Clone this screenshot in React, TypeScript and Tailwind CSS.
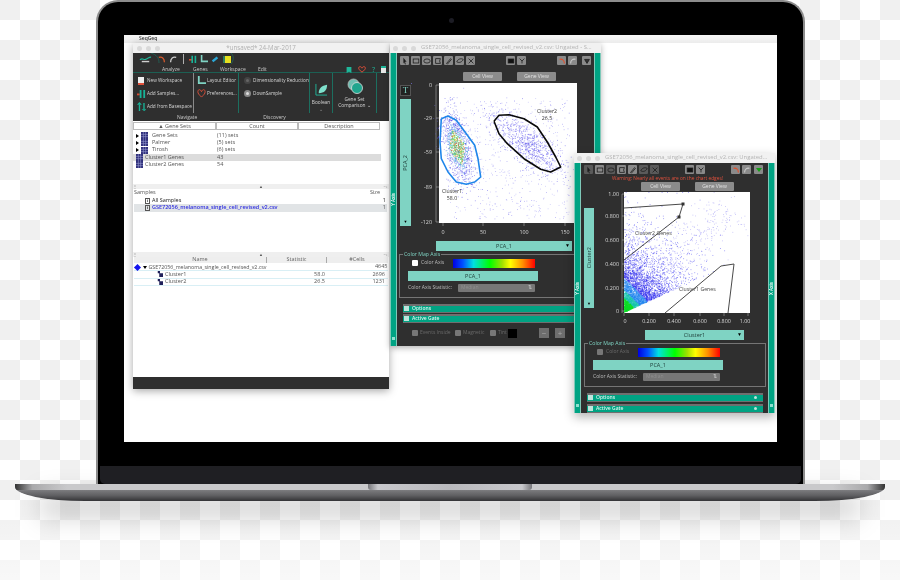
import React from 'react';

const font = "font-['Open_Sans',sans-serif]";

// small seeded generator so the scatter stays the same on every render
const makeRandom = (seed: number) => {
  let s = seed;
  return () => {
    s = (s * 1664525 + 1013904223) % 4294967296;
    return s / 4294967296;
  };
};

const gauss = (r: () => number) => Math.sqrt(-2 * Math.log(r() + 0.0001)) * Math.cos(6.283 * r());

type Dot = { x: number; y: number; c: string };

const pcaDots = (): Dot[] => {
  const r = makeRandom(11);
  const dots: Dot[] = [];
  for (let i = 0; i < 560; i++) {
    dots.push({ x: r() * 124 + 6, y: 14 + r() * 122, c: i % 2 ? '#a5a2f5' : '#7a72ee' });
  }
  for (let i = 0; i < 800; i++) {
    const a = gauss(r);
    const b = gauss(r);
    dots.push({ x: 88 + a * 17 + b * 6, y: 60 + a * 14 - b * 6, c: i % 3 ? '#4a40ea' : '#8a84f2' });
  }
  for (let i = 0; i < 1300; i++) {
    const a = gauss(r);
    const b = gauss(r);
    const x = 18 + a * 4.5 + b * 6;
    const y = 64 + a * 17 - b * 2;
    const d = Math.abs(a) + Math.abs(b) * 0.8;
    let c = i % 4 ? '#4a42ea' : '#7a72ee';
    if (d < 1.1) c = ['#e8352a', '#2fbf3a', '#e8d92a', '#27b8d8', '#2fbf3a'][i % 5];
    else if (d < 1.6 && i % 2) c = '#2a9fe0';
    dots.push({ x, y, c });
  }
  return dots;
};

const clusterDots = (): Dot[] => {
  const r = makeRandom(29);
  const list: { x: number; y: number; d: number }[] = [];
  for (let i = 0; i < 4600; i++) {
    const x = -Math.log(r() + 0.001) * 15;
    const y = -Math.log(r() + 0.001) * 18 + x * 0.45;
    list.push({ x, y, d: x + y });
  }
  const dots: Dot[] = [];
  for (let i = 0; i < 260; i++) {
    const t = r();
    dots.push({ x: 40 + t * 65 + gauss(r) * 11, y: 75 - t * 58 + gauss(r) * 11, c: '#8a84f2' });
  }
  list.sort((a, b) => b.d - a.d);
  list.forEach((p) => {
    let c = '#2a26ee';
    if (p.d < 14) c = '#12e02c';
    else if (p.d < 22) c = '#1cc8b0';
    else if (p.d < 34) c = '#1f86f0';
    dots.push({ x: p.x, y: 120 - p.y, c });
  });
  return dots;
};

const pca = pcaDots();
const cluster = clusterDots();

const Teal = ({ className = '', children }: { className?: string; children?: React.ReactNode }) => (
  <div className={`bg-[#7fd3c3] text-[#1d3b36] flex items-center justify-center ${className}`}>{children}</div>
);

const TrafficLights = () => (
  <div className="flex gap-[4px] shrink-0">
    <span className="w-[5px] h-[5px] rounded-full bg-[#d9d9d9]" />
    <span className="w-[5px] h-[5px] rounded-full bg-[#d9d9d9]" />
    <span className="w-[5px] h-[5px] rounded-full bg-[#d9d9d9]" />
  </div>
);

const TitleBar = ({ title }: { title: string }) => (
  <div className="h-[10px] shrink-0 bg-[#f1f1f1] flex items-center pl-[3px] gap-[5px]">
    <TrafficLights />
    <span className="text-[5.900px] leading-none text-[#b4b4b4] whitespace-nowrap">{title}</span>
  </div>
);

const ToolBtn = ({ children, off }: { children?: React.ReactNode; off?: boolean }) => (
  <div className={`w-[9px] h-[9px] rounded-[1px] flex items-center justify-center ${off ? 'bg-[#5a5a5a]' : 'bg-[#8a8a8a]'}`}>
    <svg viewBox="0 0 10 10" className="w-[8px] h-[8px]" fill="none" stroke="#1c1c1c" strokeWidth="1">
      {children}
    </svg>
  </div>
);

const GateTools = ({ dim }: { dim?: boolean }) => (
  <div className="flex gap-[2px]">
    <ToolBtn off={dim}><path d="M3 1l4 5H5l1 3-1 .4L4 6.500 3 8z" fill="#1c1c1c" stroke="none" /></ToolBtn>
    <ToolBtn><rect x="1.500" y="2.500" width="7" height="5" /></ToolBtn>
    <ToolBtn off={dim}><ellipse cx="5" cy="5" rx="4" ry="2.600" /></ToolBtn>
    <ToolBtn><path d="M2 2h6l-1 3 1 3H2z" /></ToolBtn>
    <ToolBtn><path d="M2 8l5-6 1 1-5 6z" /></ToolBtn>
    <ToolBtn off={dim}><path d="M1 6c1-3 5-5 8-3-1 3-5 5-8 3z" /></ToolBtn>
    <ToolBtn off={dim}><path d="M2 2l6 6M8 2L2 8" /></ToolBtn>
  </div>
);

const Pair = () => (
  <div className="flex gap-[2px]">
    <ToolBtn><rect x="1.500" y="2.500" width="7" height="5" fill="#111" /></ToolBtn>
    <ToolBtn><path d="M2 2l3 3 3-3M5 5v3" /></ToolBtn>
  </div>
);

const Undo = () => (
  <div className="flex gap-[2px]">
    <div className="w-[9px] h-[9px] rounded-[1px] bg-[#8a8a8a] flex items-center justify-center">
      <svg viewBox="0 0 10 10" className="w-[8px] h-[8px]" fill="none" stroke="#e2502c" strokeWidth="1.400"><path d="M2 3c3-1 6 1 6 5" /></svg>
    </div>
    <div className="w-[9px] h-[9px] rounded-[1px] bg-[#8a8a8a] flex items-center justify-center">
      <svg viewBox="0 0 10 10" className="w-[8px] h-[8px]" fill="none" stroke="#c9c9c9" strokeWidth="1.400"><path d="M8 3C5 2 2 4 2 8" /></svg>
    </div>
  </div>
);

const GreyBtn = ({ label, className = '' }: { label: string; className?: string }) => (
  <div className={`w-[39px] h-[9px] bg-[#8c8c8c] rounded-[1px] flex items-center justify-center text-[5px] text-[#e2e2e2] ${className}`}>{label}</div>
);

const Gradient = () => (
  <div className="w-[82px] h-[9px] bg-[linear-gradient(to_right,#0000e0,#0050ff_12%,#00e0e0_25%,#00ff00_45%,#a0e000_60%,#ffff00_70%,#ff9000_85%,#ff0000)]" />
);

const Accordion = ({ label, withKnob }: { label: string; withKnob?: boolean }) => (
  <div className="h-[9px] bg-[#6f6f6f] flex items-center py-[1.500px]">
    <div className="w-full h-full bg-[#00a383] flex items-center pl-[1px]">
      <span className="w-[5px] h-[5px] bg-[#bfe4dc] mr-[3px] shrink-0" />
      <span className="text-[5px] font-semibold text-[#d8f5ee] leading-none">{label}</span>
      {withKnob && <span className="ml-auto mr-[6px] w-[3px] h-[3px] rounded-full bg-[#bfe4dc]" />}
    </div>
  </div>
);

const ColorBox = ({ checked }: { checked: boolean }) => (
  <div className="relative border border-[#757575] h-[44px] flex flex-col pl-[8px]">
    <span className="absolute -top-[3px] left-[3px] bg-[#2f2f2f] px-[1px] text-[5.200px] leading-none text-[#7fd3c3]">Color Map Axis</span>
    <div className="flex items-center h-[16px]">
      <span className={`w-[6px] h-[6px] rounded-[1px] ml-[4px] ${checked ? 'bg-white' : 'bg-[#777777]'}`} />
      <span className={`text-[5px] ml-[3px] w-[32px] ${checked ? 'text-[#bdbdbd]' : 'text-[#6c6c6c]'}`}>Color Axis</span>
      <Gradient />
    </div>
    <Teal className="w-[130px] h-[10px] text-[5.500px]">PCA_1</Teal>
    <div className="flex items-center h-[14px] text-[5px] text-[#bdbdbd]">
      <span className="w-[50px]">Color Axis Statistic:</span>
      <div className="w-[77px] h-[8px] bg-[#777777] rounded-[1px] flex items-center justify-between px-[3px] text-[#8f8f8f]">
        <span>Median</span>
        <span className="text-[#c8c8c8]">⇅</span>
      </div>
    </div>
  </div>
);

const Strip = ({ label, className = '' }: { label: string; className?: string }) => (
  <div className={`w-[7px] shrink-0 bg-[#00a383] border-x border-[#7fc9b9] flex items-center justify-center relative ${className}`}>
    <span className="text-[4.500px] font-semibold text-white [writing-mode:vertical-rl] rotate-180 whitespace-nowrap">{label}</span>
    <span className="absolute bottom-[6px] w-[3px] h-[3px] bg-[#8fe0d0]" />
  </div>
);

const Tick = ({ x, y, children, anchor = 'end' }: { x: number; y: number; children: React.ReactNode; anchor?: 'end' | 'middle' }) => (
  <text x={x} y={y} fontSize="5.400" fill="#d5d5d5" textAnchor={anchor} fontFamily="Open Sans, sans-serif">{children}</text>
);

const PcaPlot = () => (
  <svg viewBox="0 0 166 156" className="w-[166px] h-[156px] block shrink-0 overflow-visible">
    <rect x="28" y="0" width="138" height="140" fill="#fff" />
    {pca.map((d, i) => (
      <rect key={i} x={28 + d.x} y={d.y} width="0.800" height="0.800" fill={d.c} opacity="0.65" />
    ))}
    <polyline fill="none" stroke="#1f86ea" strokeWidth="1.600" strokeLinejoin="round" points="30.300,35.700 37,33 45.300,37.300 55.300,50.700 63.700,62.300 67,75.700 69.700,94 63.700,99 55.300,101.300 45.300,99 37,89 30.300,75.700 29,59 30.300,35.700" />
    <polyline fill="none" stroke="#0a0a0a" strokeWidth="1.600" strokeLinejoin="round" points="83,38.300 88,32.300 98,31.700 113,35.700 126.300,44 136.300,59 144.700,74 149.700,84 139.700,89 129.700,86.300 113,75.700 96.300,60.700 88,50.700 83,38.300" />
    <text x="136" y="30" fontSize="5.200" fill="#333" textAnchor="middle" fontFamily="Open Sans, sans-serif">Cluster2</text>
    <text x="136" y="37" fontSize="5.200" fill="#333" textAnchor="middle" fontFamily="Open Sans, sans-serif">26.5</text>
    <text x="41" y="110" fontSize="5.200" fill="#333" textAnchor="middle" fontFamily="Open Sans, sans-serif">Cluster1</text>
    <text x="41" y="117" fontSize="5.200" fill="#333" textAnchor="middle" fontFamily="Open Sans, sans-serif">58.0</text>
    <Tick x={21} y={4}>0</Tick>
    <Tick x={21} y={37}>-29</Tick>
    <Tick x={21} y={71}>-59</Tick>
    <Tick x={21} y={106}>-89</Tick>
    <Tick x={21} y={141}>-120</Tick>
    <path d="M25 2v137M25 2h3M25 35h3M25 69h3M25 104h3M25 139h3M32 140v3M72 140v3M113 140v3M154 140v3" stroke="#aaa" strokeWidth="0.600" fill="none" />
    <Tick x={32} y={151} anchor="middle">0</Tick>
    <Tick x={72} y={151} anchor="middle">50</Tick>
    <Tick x={113} y={151} anchor="middle">100</Tick>
    <Tick x={154} y={151} anchor="middle">150</Tick>
  </svg>
);

const ClusterPlot = () => (
  <svg viewBox="0 0 156 134" className="w-[156px] h-[134px] block shrink-0 overflow-visible">
    <rect x="30" y="0" width="126" height="121" fill="#fff" />
    {cluster.map((d, i) => (
      <rect key={i} x={30 + Math.min(d.x, 125)} y={Math.max(d.y, 0)} width="0.800" height="0.800" fill={d.c} opacity="0.6" />
    ))}
    <g fill="none" stroke="#4a4a4a" strokeWidth="1">
      <polyline points="30,16 89,12 85,25 30,68" />
      <polyline points="71,121 127,74 140,72 134,121" />
    </g>
    <rect x="87.500" y="10.500" width="3" height="3" fill="#333" />
    <rect x="83.500" y="23.500" width="3" height="3" fill="#333" />
    <text x="41" y="43" fontSize="5.200" fill="#444" fontFamily="Open Sans, sans-serif">Cluster2 Genes</text>
    <text x="85" y="99" fontSize="5.200" fill="#444" fontFamily="Open Sans, sans-serif">Cluster1 Genes</text>
    <Tick x={25} y={4}>1.00</Tick>
    <Tick x={25} y={26}>0.800</Tick>
    <Tick x={25} y={50}>0.600</Tick>
    <Tick x={25} y={74}>0.400</Tick>
    <Tick x={25} y={98}>0.200</Tick>
    <Tick x={25} y={121}>0</Tick>
    <path d="M28 2v119M28 2h2M28 24h2M28 48h2M28 72h2M28 96h2M28 119h2M30 121v3M55 121v3M80 121v3M106 121v3M130 121v3M154 121v3" stroke="#aaa" strokeWidth="0.600" fill="none" />
    <Tick x={31} y={131} anchor="middle">0</Tick>
    <Tick x={55} y={131} anchor="middle">0.200</Tick>
    <Tick x={80} y={131} anchor="middle">0.400</Tick>
    <Tick x={106} y={131} anchor="middle">0.600</Tick>
    <Tick x={130} y={131} anchor="middle">0.800</Tick>
    <Tick x={151} y={131} anchor="middle">1.00</Tick>
  </svg>
);

const Grid = () => (
  <svg viewBox="0 0 8 8" className="w-[7px] h-[7px] shrink-0">
    <rect width="8" height="8" fill="#2f2f7a" />
    <path d="M0 2.700h8M0 5.300h8M2.700 0v8M5.300 0v8" stroke="#9fa3d8" strokeWidth="0.600" />
  </svg>
);

const Arrow = () => <span className="w-0 h-0 border-y-[2.500px] border-y-transparent border-l-[3.500px] border-l-black mr-[2px] shrink-0" />;

const GeneRow = ({ name, count, tree, active }: { name: string; count: string; tree?: boolean; active?: boolean }) => (
  <div className={`h-[7.300px] flex items-center text-[5.500px] leading-none text-[#555] ${active ? 'bg-[#dcdcdc]' : ''}`}>
    <div className="w-[84px] flex items-center pl-[3px]">
      {tree && <Arrow />}
      <Grid />
      <span className={tree ? 'ml-[4px]' : 'ml-[2px]'}>{name}</span>
    </div>
    <span>{count}</span>
  </div>
);

const Info = () => (
  <span className="w-[5px] h-[6px] border border-[#555] text-[4px] leading-[4px] text-center font-bold text-[#222] mr-[2px] shrink-0">i</span>
);

const Splitter = () => (
  <div className="h-[5px] shrink-0 bg-[#efefef] flex items-center justify-center relative text-[4px] leading-none text-[#555]">
    <span className="absolute left-0 text-[#777]">⋮</span>
    <span>▲</span>
    <span className="absolute right-[1px] text-[#777]">−+</span>
  </div>
);

const Gate = () => (
  <svg viewBox="0 0 8 8" className="w-[6px] h-[6px] shrink-0 mr-[2px]">
    <rect width="8" height="8" fill="#fff" />
    <path d="M1 0h3v3H1zM3 3h5v5H3z" fill="#20205a" />
  </svg>
);

const RibbonItem = ({ icon, label }: { icon: React.ReactNode; label: string }) => (
  <div className="flex items-center h-[13px] text-[4.700px] text-[#d5d5d5] whitespace-nowrap">
    <span className="w-[10px] h-[10px] flex items-center justify-center shrink-0 mr-[1px]">{icon}</span>
    {label}
  </div>
);

const Svg10 = ({ children }: { children: React.ReactNode }) => (
  <svg viewBox="0 0 10 10" className="w-[9px] h-[9px]">{children}</svg>
);

const MainWindow = () => (
  <div className="absolute left-[9px] top-[8px] w-[256px] h-[346px] bg-white flex flex-col shadow-[0_2px_8px_rgba(0,0,0,0.35)]">
    <div className="h-[10px] shrink-0 bg-[#f1f1f1] flex items-center pl-[4px] relative">
      <TrafficLights />
      <span className="absolute inset-x-0 text-center text-[6.200px] leading-none text-[#b0b0b0]">*unsaved* 24-Mar-2017</span>
    </div>
    {/* ribbon */}
    <div className="h-[68px] shrink-0 bg-[#2f2f2f] flex flex-col relative">
      <svg viewBox="0 0 110 14" className="absolute left-[6px] top-0 w-[110px] h-[14px]" fill="none" stroke="#1c6f60" strokeWidth="0.700">
        <path d="M12 0c6 2 8 5 8 10" />
        <path d="M92 0c3 3 3 7 0 11" />
      </svg>
      <div className="h-[14px] flex items-center pl-[6px] relative">
        <svg viewBox="0 0 14 8" className="w-[13px] h-[8px]">
          <path d="M1 5c3-3 4 1 7-1 2-1 3-2 5-2" stroke="#1fb79a" strokeWidth="1.200" fill="none" />
          <rect x="3" y="6" width="8" height="1.500" fill="#cfcfcf" />
        </svg>
        <svg viewBox="0 0 10 10" className="w-[8px] h-[8px] ml-[6px]" fill="none" stroke="#d95a2c" strokeWidth="1.600"><path d="M1 3c4-1 7 1 7 6" /></svg>
        <svg viewBox="0 0 10 10" className="w-[8px] h-[8px] ml-[3px]" fill="none" stroke="#d0d0d0" strokeWidth="1.600"><path d="M9 3C5 2 2 4 2 9" /></svg>
        <span className="w-px h-[10px] bg-[#b0b0b0] ml-[6px]" />
        <svg viewBox="0 0 10 10" className="w-[8px] h-[8px] ml-[5px]">
          <path d="M0 5h4v2H0z" fill="#d94a30" /><path d="M3 1h2v9H3zM7 1h2v9H7z" fill="#18b398" />
        </svg>
        <svg viewBox="0 0 10 10" className="w-[8px] h-[8px] ml-[3px]" fill="#7fd3c3"><path d="M1 0h2v7h7v2H1z" /></svg>
        <svg viewBox="0 0 10 10" className="w-[8px] h-[8px] ml-[3px]"><path d="M1 7L7 2l2 2-6 5z" fill="#2ba7d6" /></svg>
        <span className="w-[8px] h-[7px] ml-[4px] bg-[#e6e020] border-l-2 border-[#2f7f5f]" />
      </div>
      <div className="h-[8px] flex items-center text-[5px] text-[#c9c9c9] border-b border-[#1c5f53] pl-[29px] pr-[3px] pt-[2px]">
        <span className="w-[17px] text-center">Analyze</span>
        <span className="w-[14px] text-center ml-[14px]">Genes</span>
        <span className="w-[24px] text-center ml-[13px]">Workspace</span>
        <span className="w-[8px] text-center ml-[14px]">Edit</span>
        <div className="ml-auto flex items-center gap-[6px]">
          <svg viewBox="0 0 10 10" className="w-[6px] h-[8px]"><path d="M1 0h8v10L5 8 1 10z" fill="#1fb79a" /></svg>
          <svg viewBox="0 0 12 10" className="w-[8px] h-[7px]" fill="none" stroke="#e0503a" strokeWidth="1.500"><path d="M6 9C2 6 1 4 1 3c0-3 4-3 5 0 1-3 5-3 5 0 0 1-1 3-5 6z" /></svg>
          <span className="text-[7px] leading-none text-[#1fb79a]">?</span>
          <span className="w-[5px] h-[7px] bg-[#e8e8e8] border-t-2 border-[#1fb79a]" />
        </div>
      </div>
      <div className="flex-1 flex">
        <div className="w-[61px] border-r border-[#8a8a8a] flex flex-col pl-[3px] pt-[1px] relative">
          <RibbonItem label="New Workspace" icon={<span className="w-[6px] h-[8px] bg-[#eee] border-b-2 border-[#e0503a]" />} />
          <RibbonItem label="Add Samples..." icon={<Svg10><path d="M0 5h3v2H0z" fill="#d94a30" /><path d="M3 1h2v9H3zM7 1h2v9H7z" fill="#18b398" /></Svg10>} />
          <RibbonItem label="Add from Basespace" icon={<Svg10><path d="M2 3h1.500v7H2zM7 1h1.500v7H7z" fill="#18b398" /><path d="M0 3l2.700-3 2.700 3zM5 8h6l-3 2z" fill="#18b398" /></Svg10>} />
        </div>
        <div className="w-[45px] border-r border-[#1c6f60] flex flex-col pl-[2px] pt-[1px]">
          <RibbonItem label="Layout Editor" icon={<Svg10><path d="M1 0h2v7h7v2H1z" fill="#7fd3c3" /></Svg10>} />
          <RibbonItem label="Preferences..." icon={<Svg10><path d="M5 9C2 6 1 5 1 3c0-3 3-3 4 0 1-3 4-3 4 0 0 2-1 3-4 6z" fill="none" stroke="#e0503a" strokeWidth="1" /></Svg10>} />
        </div>
        <div className="w-[71px] border-r border-[#1c6f60] flex flex-col pl-[3px] pt-[1px]">
          <RibbonItem label="Dimensionality Reduction" icon={<span className="w-[7px] h-[7px] rounded-full bg-[#666] border-[2px] border-[#444]" />} />
          <RibbonItem label="DownSample" icon={<span className="w-[7px] h-[7px] rounded-full bg-[#ddd] border-[2px] border-[#888]" />} />
        </div>
        <div className="w-[23px] border-r border-[#1c6f60] flex flex-col items-center pt-[10px] text-[4.800px] text-[#d5d5d5] leading-[7px]">
          <svg viewBox="0 0 14 14" className="w-[13px] h-[13px]">
            <path d="M1 1v12h12" stroke="#1fb79a" strokeWidth="1" fill="none" />
            <path d="M4 11c0-5 3-8 9-9 0 6-3 9-9 9z" fill="#7fe0cc" />
          </svg>
          <span className="mt-[3px]">Boolean</span>
          <span className="text-[#999]">⌄</span>
        </div>
        <div className="w-[44px] border-r border-[#1c6f60] flex flex-col items-center pt-[5px] text-[4.800px] text-[#d5d5d5] leading-[6px]">
          <svg viewBox="0 0 16 16" className="w-[16px] h-[16px]">
            <circle cx="6.500" cy="6.500" r="5.500" fill="#6fbfb2" stroke="#bbb" strokeWidth="0.800" />
            <circle cx="10" cy="10" r="5.500" fill="#1fa58e" stroke="#ddd" strokeWidth="0.800" />
          </svg>
          <span className="mt-[2px]">Gene Set</span>
          <span>Comparison ⌄</span>
        </div>
      </div>
      <div className="h-[8px] flex text-[5px] leading-[8px] text-[#c9c9c9] text-center">
        <span className="w-[61px] pl-[44px] text-left whitespace-nowrap">Navigate</span>
        <span className="w-[45px]" />
        <span className="w-[71px]">Discovery</span>
      </div>
    </div>
    {/* gene sets */}
    <div className="pr-[8px] h-[63px] shrink-0 pt-px">
      <div className="h-[8px] flex text-[5.500px] text-[#555] text-center leading-[7px]">
        <span className="w-[83px] border border-[#bbb]">▲ Gene Sets</span>
        <span className="w-[82px] border border-[#bbb]">Count</span>
        <span className="w-[82px] border border-[#bbb]">Description</span>
      </div>
      <div className="pt-[2px]">
        <GeneRow name="Gene Sets" count="(11) sets" tree />
        <GeneRow name="Palmer" count="(5) sets" tree />
        <GeneRow name="Tirosh" count="(6) sets" tree />
        <GeneRow name="Cluster1 Genes" count="43" active />
        <GeneRow name="Cluster2 Genes" count="54" />
      </div>
    </div>
    <Splitter />
    {/* samples */}
    <div className="h-[63px] shrink-0 text-[5.500px] leading-none text-[#555] pl-px pr-[2px]">
      <div className="h-[8px] flex items-center justify-between pr-[7px]">
        <span>Samples</span>
        <span>Size</span>
      </div>
      <div className="h-[7px] flex items-center justify-between pl-[11px] text-[#222] pr-[1px]">
        <span className="flex items-center"><Info />All Samples</span>
        <span>1</span>
      </div>
      <div className="h-[7.500px] flex items-center justify-between pl-[11px] bg-[#e1e4e6] pr-[1px]">
        <span className="flex items-center font-semibold text-[#2c2ce0]"><Info />GSE72056_melanoma_single_cell_revised_v2.csv</span>
        <span>1</span>
      </div>
    </div>
    <Splitter />
    {/* gates */}
    <div className="flex-1 text-[5.500px] leading-none text-[#555] px-px">
      <div className="h-[6px] flex text-center leading-[5px] bg-[#eee] text-[#666] mb-px">
        <span className="w-[133px] border-r border-[#aaa]">Name</span>
        <span className="w-[60px] border-r border-[#aaa]">Statistic</span>
        <span className="w-[60px]">#Cells</span>
      </div>
      <div className="h-[7.300px] flex items-center border-b border-[#d9eff5]">
        <span className="w-[5px] h-[5px] rotate-45 bg-[#1414ee] ml-[1px] mr-[2.500px] shrink-0" />
        <span className="w-0 h-0 border-x-[2px] border-x-transparent border-t-[3px] border-t-black mr-[2px] shrink-0" />
        <span className="w-[120px] shrink-0 whitespace-nowrap text-[5.300px]">GSE72056_melanoma_single_cell_revised_v2.csv</span>
        <span className="w-[60px] shrink-0" />
        <span className="w-[59px] text-right">4645</span>
      </div>
      {[
        ['Cluster1', '58.0', '2696'],
        ['Cluster2', '26.5', '1231'],
      ].map(([name, stat, cells]) => (
        <div key={name} className="h-[7.300px] flex items-center border-b border-[#d9eff5]">
          <span className="w-[23px] shrink-0" />
          <Gate />
          <span className="w-[101px]">{name}</span>
          <span className="w-[59px] text-right">{stat}</span>
          <span className="w-[60px] text-right">{cells}</span>
        </div>
      ))}
    </div>
    <div className="h-[12px] shrink-0 bg-[#2f2f2f]" />
  </div>
);

const PcaWindow = () => (
  <div className="absolute left-[266px] top-[8px] w-[211px] h-[303px] flex flex-col shadow-[0_2px_6px_rgba(0,0,0,0.3)]">
    <TitleBar title="GSE72056_melanoma_single_cell_revised_v2.csv: Ungated - S..." />
    <div className="flex-1 flex bg-[#2f2f2f] min-h-0">
      <Strip label="Y Axis" />
      <div className="flex-1 min-w-0 flex flex-col">
        <div className="h-[14px] shrink-0 flex items-center pl-[3px] pt-[1px]">
          <GateTools />
          <div className="ml-[31px]"><Pair /></div>
          <div className="ml-[31px]"><Undo /></div>
          <div className="ml-[5px]"><ToolBtn><path d="M2 3h6L5 8z" fill="#333" /></ToolBtn></div>
        </div>
        <div className="flex gap-[15px] pl-[66px] pt-[5px] h-[16px] shrink-0">
          <GreyBtn label="Cell View" />
          <GreyBtn label="Gene View" />
        </div>
        <div className="flex pl-[3px] shrink-0">
          <div className="w-[11px] shrink-0 flex flex-col">
            <div className="h-[11px] mt-[2px] border border-[#555] bg-[#222] text-[9px] leading-[9px] text-center text-[#7fd3c3] font-['Liberation_Serif',serif]">T</div>
            <Teal className="h-[127px] mt-[3px] relative text-[5.500px]">
              <span className="[writing-mode:vertical-rl] rotate-180">PCA_2</span>
              <span className="absolute bottom-[1px] text-[4px] text-black">▼</span>
            </Teal>
          </div>
          <PcaPlot />
        </div>
        <Teal className="w-[136px] h-[10px] shrink-0 ml-[39px] mt-[2px] relative text-[5.500px]">
          PCA_1
          <span className="absolute right-[2px] text-[5px] text-black">▼</span>
        </Teal>
        <div className="mt-[3px] ml-[2px] mr-[2px] shrink-0"><ColorBox checked /></div>
        <div className="mt-[6px] ml-[6px] shrink-0">
          <Accordion label="Options" />
          <div className="mt-px"><Accordion label="Active Gate" /></div>
        </div>
        <div className="h-[20px] shrink-0 flex items-center pl-[15px] text-[5px] text-[#6a6a6a]">
          <span className="w-[6px] h-[6px] bg-[#777] rounded-[1px] mr-[2px]" />
          <span className="w-[35px]">Events Inside</span>
          <span className="w-[6px] h-[6px] bg-[#777] rounded-[1px] mr-[2px]" />
          <span className="w-[27px]">Magnetic</span>
          <span className="w-[6px] h-[6px] bg-[#777] rounded-[1px] mr-[2px]" />
          <span className="w-[10px]">Tint</span>
          <span className="w-[9px] h-[9px] bg-black" />
          <span className="w-[10px] h-[10px] bg-[#6e6e6e] ml-[22px] text-center leading-[9px] text-[#aaa] text-[8px]">−</span>
          <span className="w-[10px] h-[10px] bg-[#6e6e6e] ml-[6px] text-center leading-[9px] text-[#aaa] text-[8px]">+</span>
        </div>
      </div>
      <Strip label="" />
    </div>
  </div>
);

const ClusterWindow = () => (
  <div className="absolute left-[450px] top-[118px] w-[201px] h-[260px] flex flex-col shadow-[0_4px_10px_rgba(0,0,0,0.3)]">
    <TitleBar title="GSE72056_melanoma_single_cell_revised_v2.csv: Ungated..." />
    <div className="flex-1 flex bg-[#2f2f2f] min-h-0">
      <Strip label="Y Axis" />
      <div className="flex-1 min-w-0 flex flex-col">
        <div className="h-[11px] shrink-0 flex items-center pl-[3px] pt-[2px]">
          <GateTools dim />
          <div className="ml-[26px]"><Pair /></div>
          <div className="ml-[26px]"><Undo /></div>
          <div className="ml-[3px]">
            <div className="w-[9px] h-[9px] rounded-[1px] bg-[#8a8a8a] flex items-center justify-center">
              <span className="w-0 h-0 border-x-[3px] border-x-transparent border-t-[4px] border-t-[#12a012]" />
            </div>
          </div>
        </div>
        <div className="h-[8px] shrink-0 text-[4.800px] leading-[8px] text-[#e2503c] text-center pr-[14px] whitespace-nowrap">Warning: Nearly all events are on the chart edges!</div>
        <div className="flex gap-[15px] pl-[60px] h-[9px] shrink-0">
          <GreyBtn label="Cell View" className="text-[#333]" />
          <GreyBtn label="Gene View" />
        </div>
        <div className="flex pl-[3px] pt-[1px] shrink-0">
          <div className="w-[10px] shrink-0 pt-[16px]">
            <Teal className="h-[100px] relative text-[5.500px]">
              <span className="[writing-mode:vertical-rl] rotate-180">Cluster2</span>
              <span className="absolute bottom-[1px] text-[4px] text-black">▼</span>
            </Teal>
          </div>
          <ClusterPlot />
        </div>
        <Teal className="w-[99px] h-[10px] shrink-0 ml-[64px] mt-[4px] relative text-[5.500px]">
          Cluster1
          <span className="absolute right-[2px] text-[5px] text-black">▼</span>
        </Teal>
        <div className="mt-[3px] ml-[3px] mr-[2px] shrink-0"><ColorBox checked={false} /></div>
        <div className="mt-[6px] ml-[6px] mr-[5px] shrink-0">
          <Accordion label="Options" withKnob />
          <div className="mt-[2px]"><Accordion label="Active Gate" withKnob /></div>
        </div>
      </div>
      <Strip label="X Axis" />
    </div>
  </div>
);

export default function App() {
  return (
    <div className={`relative w-[900px] h-[580px] overflow-hidden bg-[conic-gradient(#fff_25%,#f0f0f0_0_50%,#fff_0_75%,#f0f0f0_0)] bg-[length:40px_40px] ${font}`}>
      {/* soft fade of the pattern and cast shadow under the laptop */}
      <div className="absolute inset-x-0 top-[500px] h-[80px] bg-[linear-gradient(to_bottom,rgba(255,255,255,0),rgba(255,255,255,0.55))]" />
      <div className="absolute left-[40px] right-[40px] top-[494px] h-[24px] bg-[rgba(0,0,0,0.17)] blur-[12px]" />

      <div className="relative pl-[96px]">
        {/* lid */}
        <div className="w-[709px] h-[484px] bg-black rounded-t-[22px] border-x-2 border-t-2 border-[#8c8c8c] flex flex-col relative">
          <span className="absolute top-[16px] left-[351px] w-[5px] h-[5px] rounded-full bg-[#1c1c24]" />
          <div className="ml-[26px] mt-[33px] w-[653px] h-[407px] bg-white relative overflow-hidden blur-[0.5px]">
            <div className="h-[8px] bg-[linear-gradient(to_bottom,#f7f7f7,#ececec)] flex items-center pl-[15px] text-[5px] font-semibold text-[#333]">SeqGeq</div>
            <MainWindow />
            <PcaWindow />
            <ClusterWindow />
          </div>
          <div className="mt-auto mx-[2px] h-[18px] bg-[#1f1f23] rounded-b-[5px]" />
        </div>
      </div>

      {/* base */}
      <div className="relative ml-[15px] w-[870px] h-[17px] flex flex-col rounded-bl-[70px_14px] rounded-br-[70px_14px] overflow-hidden">
        <div className="h-[6px] flex bg-[linear-gradient(to_right,#333,#a9a9ab_2%,#c9c9cb_6%,#c9c9cb_94%,#a9a9ab_98%,#333)]">
          <div className="ml-[353px] w-[164px] bg-[linear-gradient(to_right,#77777b,#c8c8cc_6%,#b9b9bd_50%,#c8c8cc_94%,#77777b)] rounded-b-[3px]" />
        </div>
        <div className="flex-1 bg-[linear-gradient(to_bottom,#7c7c7f,#5f5f62_50%,#333336)]" />
      </div>
    </div>
  );
}
